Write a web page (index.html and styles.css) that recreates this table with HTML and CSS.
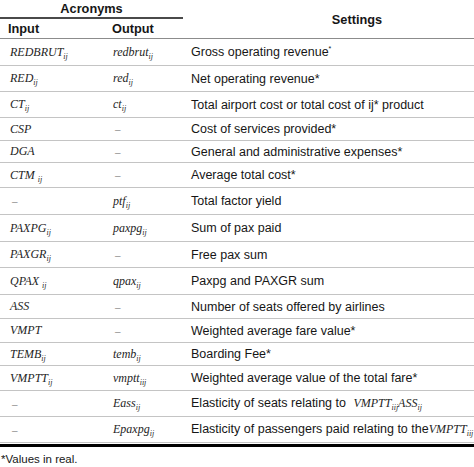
FILE: index.html
```html
<!DOCTYPE html>
<html>
<head>
<meta charset="utf-8">
<link rel="stylesheet" href="styles.css">
</head>
<body>
<div class="page">
<table class="acr">
  <colgroup><col class="c1"><col class="c2"><col class="c3"></colgroup>
  <thead>
    <tr class="hr1">
      <th colspan="2" class="group">Acronyms</th>
      <th rowspan="2" class="settings">Settings</th>
    </tr>
    <tr class="hr2">
      <th class="left">Input</th>
      <th class="left">Output</th>
    </tr>
  </thead>
  <tbody>
    <tr class="h27"><td><span class="s">REDBRUT<sub>ij</sub></span></td><td><span class="s">redbrut<sub>ij</sub></span></td><td>Gross operating revenue<sup>*</sup></td></tr>
    <tr class="h26"><td><span class="s">RED<sub>ij</sub></span></td><td><span class="s">red<sub>ij</sub></span></td><td>Net operating revenue*</td></tr>
    <tr class="h26"><td><span class="s">CT<sub>ij</sub></span></td><td><span class="s">ct<sub>ij</sub></span></td><td>Total airport cost or total cost of ij* product</td></tr>
    <tr class="h23"><td><span class="s">CSP</span></td><td><span class="d">–</span></td><td>Cost of services provided*</td></tr>
    <tr class="h22"><td><span class="s">DGA</span></td><td><span class="d">–</span></td><td>General and administrative expenses*</td></tr>
    <tr class="h25"><td><span class="s">CTM <sub>ij</sub></span></td><td><span class="d">–</span></td><td>Average total cost*</td></tr>
    <tr class="h27"><td><span class="d">–</span></td><td><span class="s">ptf<sub>ij</sub></span></td><td>Total factor yield</td></tr>
    <tr class="h27"><td><span class="s">PAXPG<sub>ij</sub></span></td><td><span class="s">paxpg<sub>ij</sub></span></td><td>Sum of pax paid</td></tr>
    <tr class="h26"><td><span class="s">PAXGR<sub>ij</sub></span></td><td><span class="d">–</span></td><td>Free pax sum</td></tr>
    <tr class="h27"><td><span class="s">QPAX <sub>ij</sub></span></td><td><span class="s">qpax<sub>ij</sub></span></td><td>Paxpg and PAXGR sum</td></tr>
    <tr class="h24"><td><span class="s">ASS</span></td><td><span class="d">–</span></td><td>Number of seats offered by airlines</td></tr>
    <tr class="h24"><td><span class="s">VMPT</span></td><td><span class="d">–</span></td><td>Weighted average fare value*</td></tr>
    <tr class="h23"><td><span class="s">TEMB<sub>ij</sub></span></td><td><span class="s">temb<sub>ij</sub></span></td><td>Boarding Fee*</td></tr>
    <tr class="h25"><td><span class="s">VMPTT<sub>ij</sub></span></td><td><span class="s">vmptt<sub>iij</sub></span></td><td>Weighted average value of the total fare*</td></tr>
    <tr class="h26"><td><span class="d">–</span></td><td><span class="s">Eass<sub>ij</sub></span></td><td>Elasticity of seats relating to <span class="s gap">VMPTT<sub>iij</sub>ASS<sub>ij</sub></span></td></tr>
    <tr class="h26"><td><span class="d">–</span></td><td><span class="s">Epaxpg<sub>ij</sub></span></td><td>Elasticity of passengers paid relating to the<span class="s">VMPTT<sub>iij</sub></span></td></tr>
  </tbody>
</table>
<div class="rule"></div>
<p class="note">*Values in real.</p>
</div>
</body>
</html>
```

FILE: styles.css
```css
html, body {
  margin: 0;
  padding: 0;
  background: #ffffff;
  overflow: hidden;
}

.page {
  width: 474px;
  overflow: hidden;
}

.acr {
  width: 474px;
  border-collapse: separate;
  border-spacing: 0;
  table-layout: fixed;
  font-family: "Liberation Sans", Arial, sans-serif;
  font-size: 12.5px;
  color: #161616;
}

.c1 { width: 104px; }
.c2 { width: 79px; }
.c3 { width: 291px; }

th, td {
  box-sizing: border-box;
  padding: 0 0 0 8px;
  vertical-align: middle;
  white-space: nowrap;
  overflow: hidden;
  text-overflow: clip;
}

th {
  font-weight: bold;
  font-size: 12.75px;
}

.hr1 th.group {
  height: 19px;
  text-align: center;
  padding: 0;
  border-bottom: 2px solid #4a4a4a;
}

.hr2 th {
  height: 20px;
  text-align: left;
  padding-left: 8px;
  border-bottom: 1px solid #8c8c8c;
}

th.settings {
  text-align: center;
  padding: 0 0 0 57px;
  border-bottom: 1px solid #8c8c8c;
}

td {
  border-bottom: 1px solid #c4c4c4;
}

td:first-child {
  padding-left: 10px;
}

td:nth-child(2) {
  padding-left: 9px;
}

.h22 td { height: 22px; }
.h23 td { height: 23px; }
.h24 td { height: 24px; }
.h25 td { height: 25px; }
.h26 td { height: 26px; }
.h27 td { height: 27px; }

.s {
  font-family: "Liberation Serif", "Times New Roman", serif;
  font-style: italic;
  font-size: 12px;
  color: #1e1e1e;
}

.s sub {
  font-size: 8px;
  vertical-align: -3px;
  line-height: 0;
}

.gap {
  margin-left: 4px;
}

.d {
  font-family: "Liberation Serif", "Times New Roman", serif;
  font-size: 11px;
  color: #6a6a6a;
  padding-left: 2px;
}

sup {
  font-size: 7px;
  line-height: 0;
  vertical-align: 5px;
}

.rule {
  height: 3px;
  background: #000000;
  margin-top: 1px;
}

.note {
  margin: 5px 0 0 1px;
  font-family: "Liberation Sans", Arial, sans-serif;
  font-size: 11.5px;
  line-height: 14px;
  color: #161616;
}
```
